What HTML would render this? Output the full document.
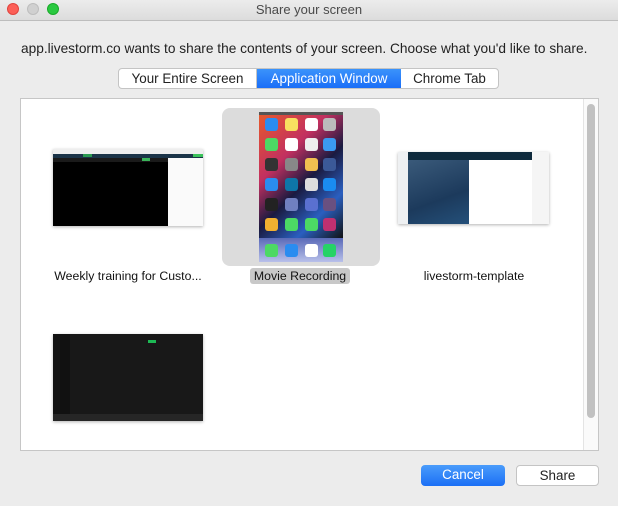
<!DOCTYPE html>
<html><head><style>
*{margin:0;padding:0;box-sizing:border-box}
body{width:618px;height:506px;background:#ececec;font-family:"Liberation Sans",sans-serif;font-size:13px;color:#222;position:relative;overflow:hidden}
.abs{position:absolute}
.tb{left:0;top:0;width:618px;height:21px;background:linear-gradient(#ececec,#dcdcdc);border-bottom:1px solid #bdbdbd;text-align:center;line-height:20px;color:#4a4a4a;font-size:13px}
.dot{top:3px;width:12px;height:12px;border-radius:50%}
.seg{top:68px;height:21px;background:#fff;border:1px solid #c4c4c4;border-radius:4px;display:flex;overflow:hidden;font-size:13.4px}
.seg div{line-height:19px;text-align:center}
.btn{height:21px;border-radius:4px;text-align:center;line-height:20px;font-size:13.4px}
.lbl{font-size:12.3px;color:#111;text-align:center}
.ic{position:absolute;width:13px;height:13px;border-radius:3px}
</style></head><body>
<div class="abs tb">Share your screen</div>
<div class="abs dot" style="left:7px;background:#fc5f57;border:1px solid #e0443e"></div>
<div class="abs dot" style="left:27px;background:#d0d0d0;border:1px solid #bdbdbd"></div>
<div class="abs dot" style="left:47px;background:#2ac940;border:1px solid #1aab2a"></div>
<div class="abs" style="left:21px;top:41px;font-size:13.7px;color:#222;white-space:nowrap">app.livestorm.co wants to share the contents of your screen. Choose what you'd like to share.</div>
<div class="abs seg" style="left:118px;width:381px">
<div style="width:138px;border-right:1px solid #c4c4c4">Your Entire Screen</div>
<div style="width:144px;background:linear-gradient(#3b93fb,#1a6ef7);color:#fff">Application Window</div>
<div style="flex:1">Chrome Tab</div>
</div>
<div class="abs" style="left:20px;top:98px;width:579px;height:353px;background:#fff;border:1px solid #c6c6c6"></div>
<div class="abs" style="left:583px;top:99px;width:15px;height:351px;background:#fafafa;border-left:1px solid #e4e4e4"></div>
<div class="abs" style="left:587px;top:104px;width:8px;height:314px;background:#c1c1c1;border-radius:4px"></div>

<!-- thumb1 -->
<div class="abs" style="left:53px;top:149px;width:150px;height:77px;background:#000;box-shadow:0 1px 3px rgba(0,0,0,.3)">
<div class="abs" style="left:0;top:0;width:150px;height:5px;background:#eee"></div>
<div class="abs" style="left:0;top:5px;width:150px;height:4px;background:#1b3448"></div>
<div class="abs" style="left:30px;top:5px;width:9px;height:3px;background:#2a9a50"></div>
<div class="abs" style="left:140px;top:5px;width:10px;height:3px;background:#3bc25a"></div>
<div class="abs" style="left:0;top:9px;width:115px;height:4px;background:#1a1a1a"></div>
<div class="abs" style="left:89px;top:9px;width:8px;height:3px;background:#3bb55a"></div>
<div class="abs" style="left:115px;top:9px;width:35px;height:68px;background:#fafafa"></div>
</div>
<div class="abs lbl" style="left:28px;top:269px;width:200px">Weekly training for Custo...</div>

<!-- thumb2 -->
<div class="abs" style="left:222px;top:108px;width:158px;height:158px;background:#dcdcdc;border-radius:8px"></div>
<div class="abs" style="left:259px;top:112px;width:84px;height:150px;background:linear-gradient(135deg,#e85a2a 0%,#c23060 30%,#1a1a40 50%,#2a5fc0 70%,#111 90%)">
<div class="abs" style="left:0;top:0;width:84px;height:3px;background:#555"></div>
<div class="ic" style="left:6px;top:6px;background:#2a8cf0"></div><div class="ic" style="left:26px;top:6px;background:#f8e060"></div><div class="ic" style="left:46px;top:6px;background:#fff"></div><div class="ic" style="left:64px;top:6px;background:#bbb"></div>
<div class="ic" style="left:6px;top:26px;background:#4cd964"></div><div class="ic" style="left:26px;top:26px;background:#fff"></div><div class="ic" style="left:46px;top:26px;background:#eee"></div><div class="ic" style="left:64px;top:26px;background:#3a9af0"></div>
<div class="ic" style="left:6px;top:46px;background:#333"></div><div class="ic" style="left:26px;top:46px;background:#888"></div><div class="ic" style="left:46px;top:46px;background:#f0c050"></div><div class="ic" style="left:64px;top:46px;background:#3b5998"></div>
<div class="ic" style="left:6px;top:66px;background:#2a8cf0"></div><div class="ic" style="left:26px;top:66px;background:#0e76a8"></div><div class="ic" style="left:46px;top:66px;background:#ddd"></div><div class="ic" style="left:64px;top:66px;background:#1a8cf0"></div>
<div class="ic" style="left:6px;top:86px;background:#222"></div><div class="ic" style="left:26px;top:86px;background:#7080c0"></div><div class="ic" style="left:46px;top:86px;background:#5a70d0"></div><div class="ic" style="left:64px;top:86px;background:#6a5080"></div>
<div class="ic" style="left:6px;top:106px;background:#f0b030"></div><div class="ic" style="left:26px;top:106px;background:#4cd964"></div><div class="ic" style="left:46px;top:106px;background:#4cd964"></div><div class="ic" style="left:64px;top:106px;background:#c03070"></div>
<div class="abs" style="left:0;top:126px;width:84px;height:24px;background:linear-gradient(#5a6ab8,#b8c0ea)"></div>
<div class="ic" style="left:6px;top:132px;background:#4cd964"></div><div class="ic" style="left:26px;top:132px;background:#2a8cf0"></div><div class="ic" style="left:46px;top:132px;background:#fff"></div><div class="ic" style="left:64px;top:132px;background:#25d366"></div>
</div>
<div class="abs" style="left:250px;top:268px;width:100px;height:16px;background:#c8c8c8;border-radius:3px"></div>
<div class="abs lbl" style="left:250px;top:269px;width:100px">Movie Recording</div>

<!-- thumb3 -->
<div class="abs" style="left:398px;top:152px;width:151px;height:72px;background:#fff;box-shadow:0 1px 3px rgba(0,0,0,.3)">
<div class="abs" style="left:0;top:0;width:10px;height:72px;background:#eef0f2"></div>
<div class="abs" style="left:10px;top:0;width:124px;height:8px;background:#0e2a3c"></div>
<div class="abs" style="left:10px;top:8px;width:61px;height:64px;background:linear-gradient(160deg,#3a5a7a,#1c3a5c 60%,#24507a)"></div>
<div class="abs" style="left:134px;top:0;width:17px;height:72px;background:#f5f5f5"></div>
</div>
<div class="abs lbl" style="left:374px;top:269px;width:200px">livestorm-template</div>

<!-- thumb4 -->
<div class="abs" style="left:53px;top:334px;width:150px;height:87px;background:#181818;box-shadow:0 1px 3px rgba(0,0,0,.3)">
<div class="abs" style="left:0;top:0;width:17px;height:87px;background:#111"></div>
<div class="abs" style="left:95px;top:6px;width:8px;height:3px;background:#1db954"></div>
<div class="abs" style="left:0;top:80px;width:150px;height:7px;background:#262626"></div>
</div>

<div class="abs btn" style="left:421px;top:465px;width:84px;background:linear-gradient(#4a9cfb,#1b6ff5);color:#fff">Cancel</div>
<div class="abs btn" style="left:516px;top:465px;width:83px;background:#fff;border:1px solid #c4c4c4;line-height:19px">Share</div>
</body></html>
